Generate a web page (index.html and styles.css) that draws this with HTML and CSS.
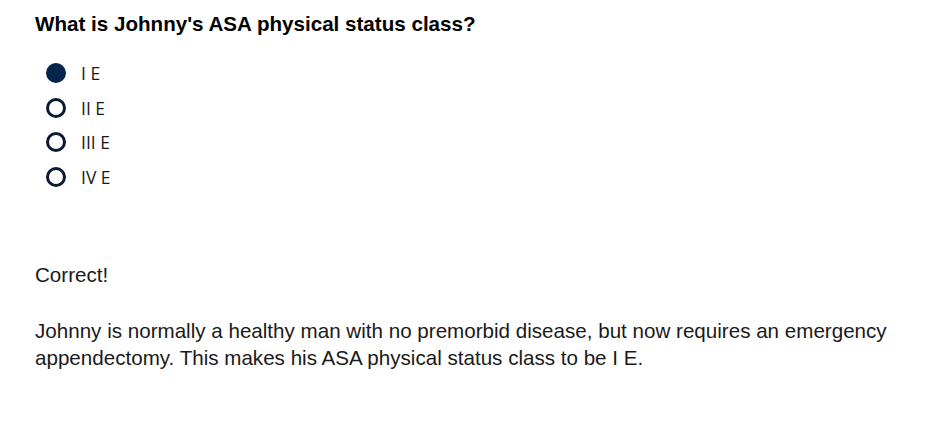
FILE: index.html
```html
<!DOCTYPE html>
<html>
<head>
<meta charset="utf-8">
<link rel="stylesheet" href="styles.css">
</head>
<body>
<div class="quiz">
  <h1 class="question">What is Johnny's ASA physical status class?</h1>
  <ul class="options">
    <li class="option"><span class="radio checked"></span><span class="label">I E</span></li>
    <li class="option"><span class="radio"></span><span class="label">II E</span></li>
    <li class="option"><span class="radio"></span><span class="label">III E</span></li>
    <li class="option"><span class="radio"></span><span class="label">IV E</span></li>
  </ul>
  <p class="verdict">Correct!</p>
  <p class="explanation">Johnny is normally a healthy man with no premorbid disease, but now requires an emergency appendectomy. This makes his ASA physical status class to be I E.</p>
</div>
</body>
</html>
```
FILE: styles.css
```css
html, body {
  margin: 0;
  padding: 0;
  background: #fff;
}
body {
  font-family: "Liberation Sans", Arial, sans-serif;
  color: #1a1a1a;
}
.quiz {
  padding: 11px 35px 0 35px;
}
.question {
  margin: 0;
  font-size: 20.6px;
  font-weight: bold;
  line-height: 26px;
  color: #000;
}
.options {
  list-style: none;
  margin: 26px 0 0 0;
  padding: 0 0 0 11px;
  display: flex;
  flex-direction: column;
  gap: 14.7px;
}
.option {
  display: flex;
  align-items: center;
  gap: 15px;
  height: 20px;
}
.radio {
  width: 14px;
  height: 14px;
  border: 3px solid #0a1a33;
  border-radius: 50%;
  box-sizing: content-box;
  flex: none;
}
.radio.checked {
  background: #06254a;
  border-color: #06254a;
}
.label {
  font-family: "Open Sans", sans-serif;
  font-size: 17.5px;
  color: #1a1a1a;
}
.verdict {
  margin: 74px 0 0 0;
  font-size: 20.6px;
  line-height: 27px;
}
.explanation {
  margin: 29px 0 0 0;
  font-size: 20.6px;
  line-height: 27px;
}
```
